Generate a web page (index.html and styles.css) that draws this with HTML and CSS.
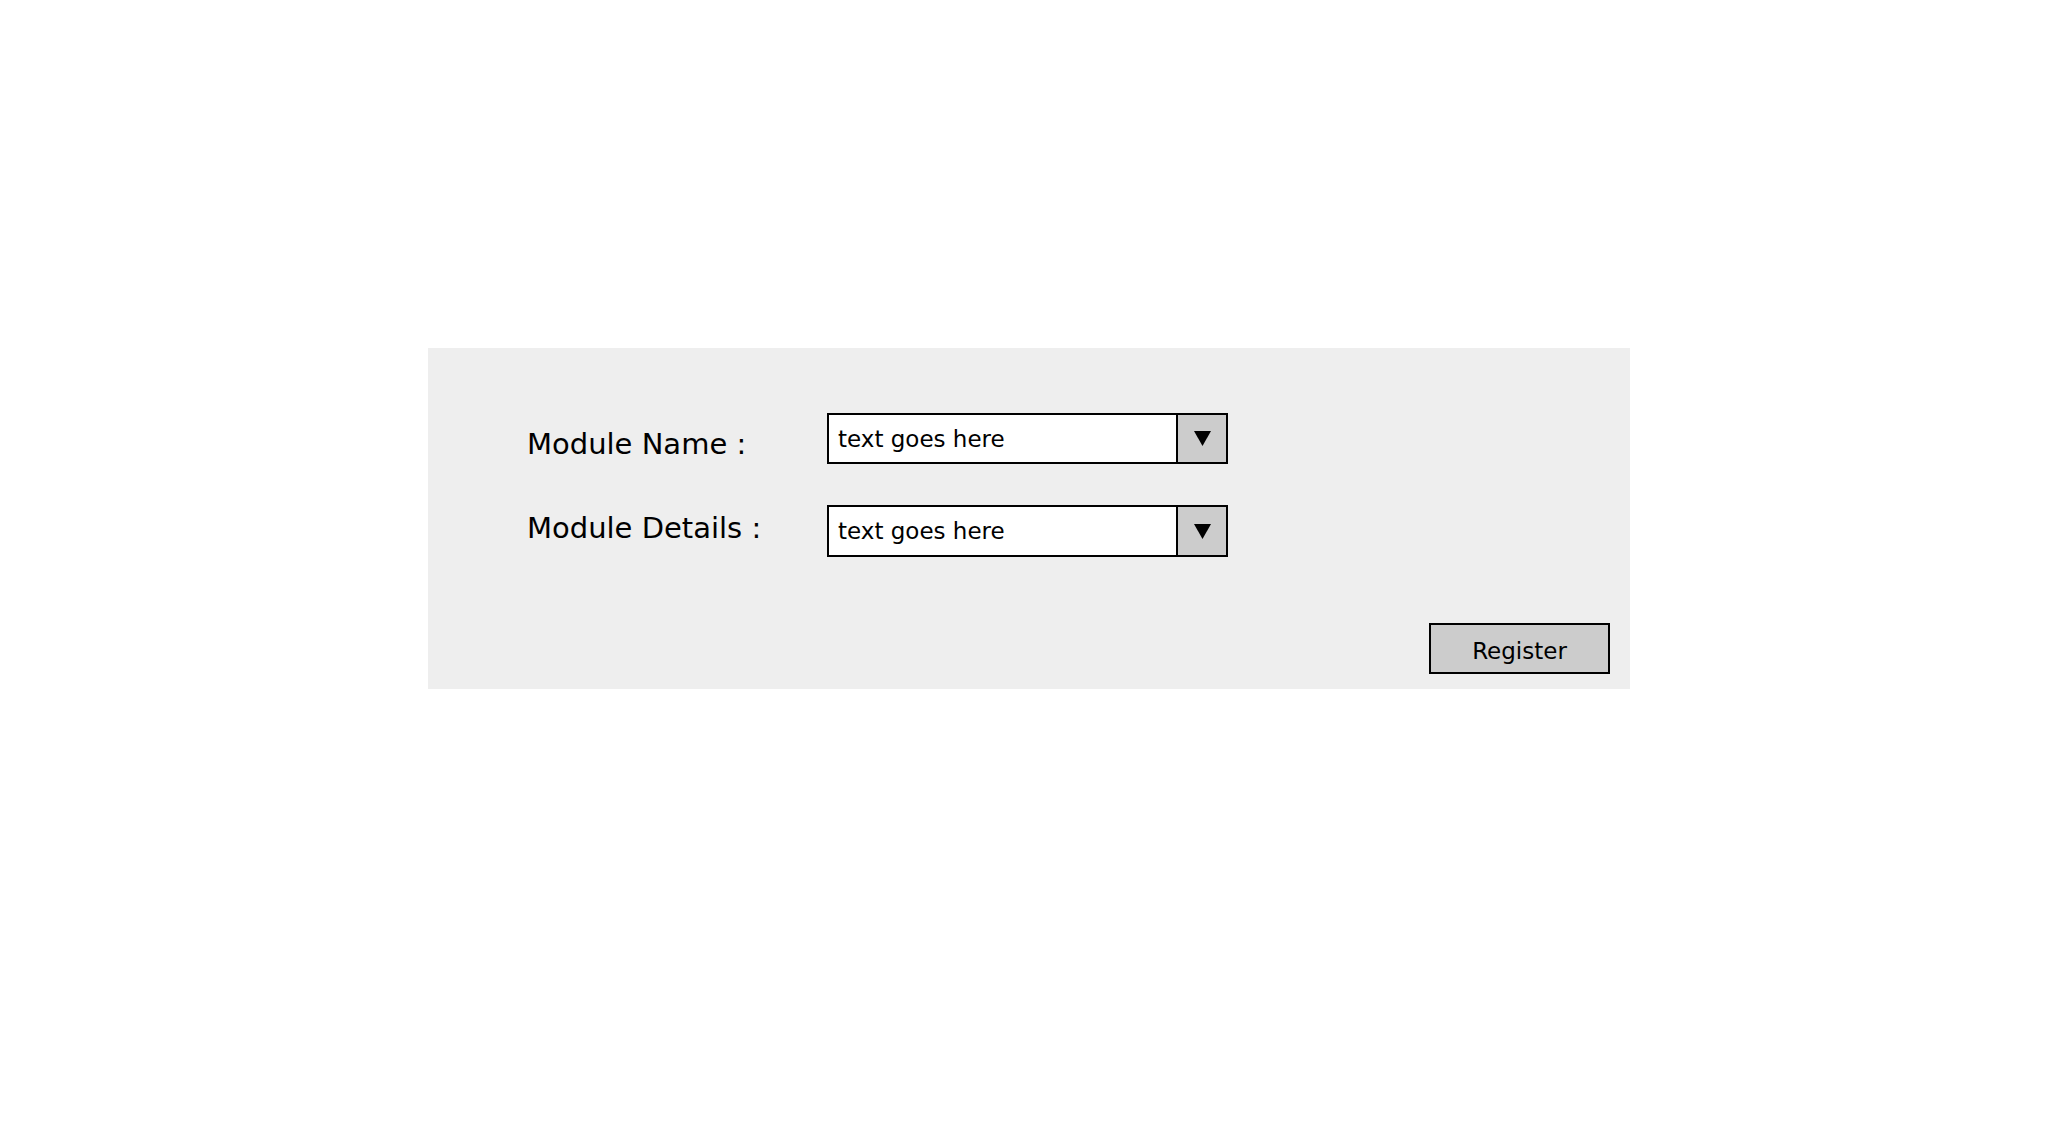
FILE: index.html
```html
<!DOCTYPE html>
<html>
<head>
<meta charset="utf-8">
<link rel="stylesheet" href="styles.css">
</head>
<body>
<div class="page">
  <div class="panel">
    <div class="form">
      <div class="row">
        <div class="label label-name">Module Name :</div>
        <div class="select">
          <span class="select-text">text goes here</span>
          <span class="select-btn"><svg width="17" height="15" viewBox="0 0 17 15"><polygon points="0,0 17,0 8.5,15" fill="#000"/></svg></span>
        </div>
      </div>
      <div class="row row-second">
        <div class="label label-details">Module Details :</div>
        <div class="select">
          <span class="select-text">text goes here</span>
          <span class="select-btn"><svg width="17" height="15" viewBox="0 0 17 15"><polygon points="0,0 17,0 8.5,15" fill="#000"/></svg></span>
        </div>
      </div>
    </div>
    <div class="footer">
      <button class="btn">Register</button>
    </div>
  </div>
</div>
</body>
</html>
```
FILE: styles.css
```css
html, body {
  margin: 0;
  padding: 0;
  background: #ffffff;
}
body {
  font-family: "Comic Sans MS", "DejaVu Sans", sans-serif;
  color: #000;
}
.page {
  padding: 348px 0 0 428px;
}
.panel {
  width: 1202px;
  height: 341px;
  box-sizing: border-box;
  background: #eeeeee;
  padding: 65px 20px 15px 99px;
  display: flex;
  flex-direction: column;
}
.form {
  display: flex;
  flex-direction: column;
  gap: 41px;
}
.row {
  display: flex;
  align-items: flex-start;
}
.label {
  width: 300px;
  font-size: 29px;
  line-height: 32px;
  white-space: nowrap;
}
.label-name { padding-top: 15px; }
.label-details { padding-top: 7px; }
.select {
  width: 401px;
  height: 51px;
  box-sizing: border-box;
  border: 2px solid #000;
  background: #fff;
  display: flex;
  align-items: stretch;
}
.row-second .select { height: 52px; }
.select-text {
  flex: 1;
  padding: 2px 0 0 9px;
  font-size: 23px;
  line-height: 45px;
  white-space: nowrap;
}
.select-btn {
  width: 48px;
  border-left: 2px solid #000;
  background: #cccccc;
  display: flex;
  align-items: center;
  justify-content: center;
}
.footer {
  margin-top: auto;
  display: flex;
  justify-content: flex-end;
}
.btn {
  width: 181px;
  height: 51px;
  box-sizing: border-box;
  border: 2px solid #000;
  background: #cccccc;
  font-family: "Comic Sans MS", "DejaVu Sans", sans-serif;
  font-size: 23px;
  line-height: 49px;
  color: #000;
  padding: 2px 0 0 0;
  border-radius: 0;
}
```
